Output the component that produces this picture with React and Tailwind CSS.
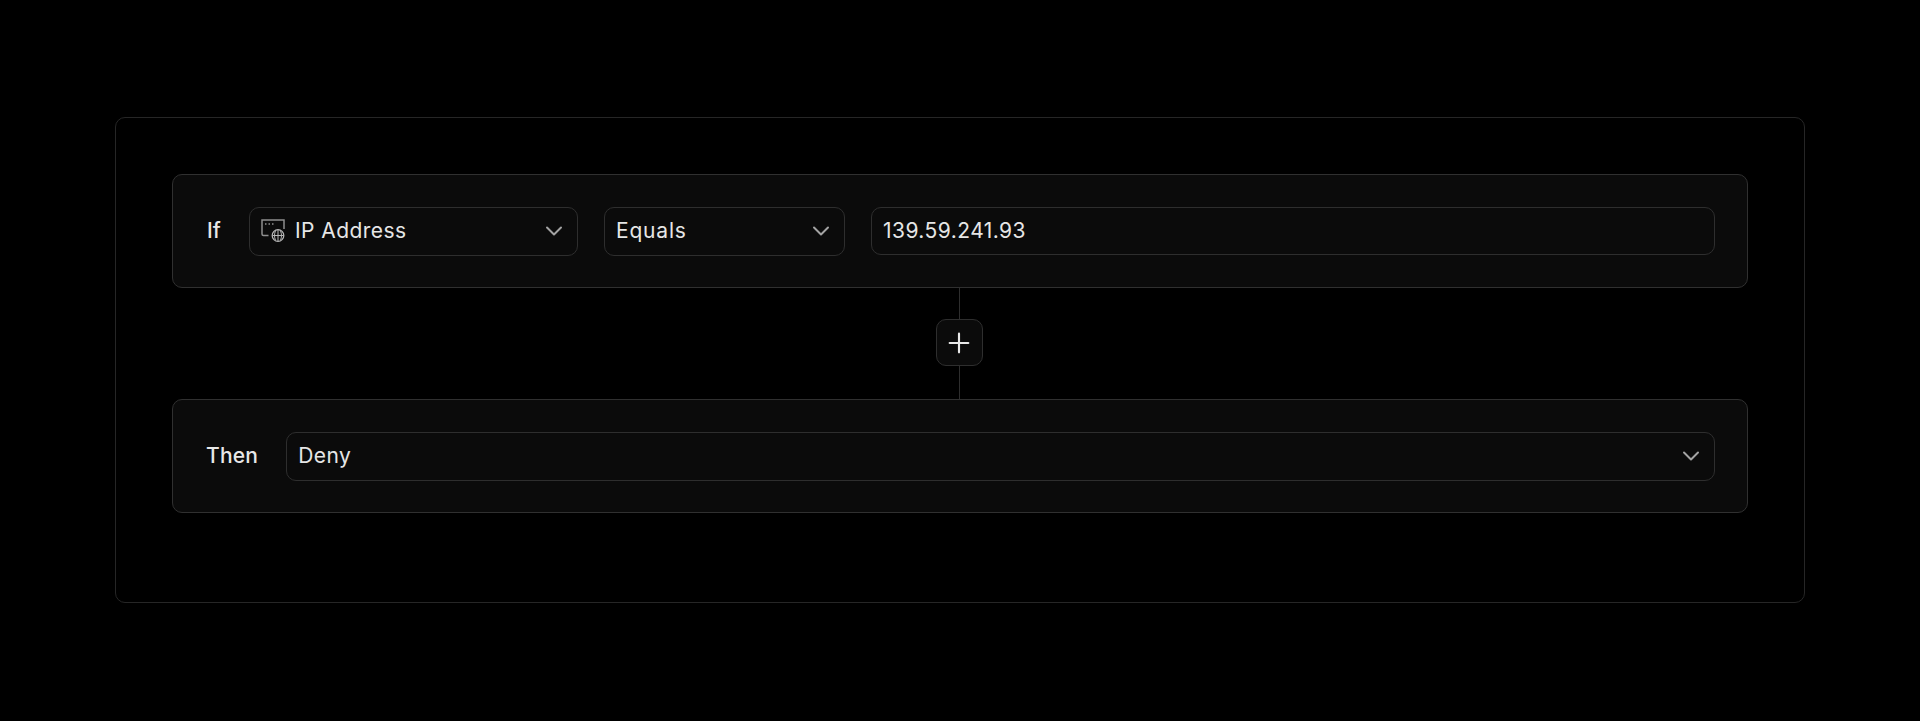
import { ChevronDown, Plus } from "lucide-react";

const font = { fontFamily: "Inter, sans-serif" };

function IpIcon() {
  return (
    <svg width="24" height="24" viewBox="0 0 24 24" fill="none" className="shrink-0">
      <path d="M7.5 16.5H2.5C1.4 16.5 1 16 1 15V1H23V10" stroke="#8f8f8f" strokeWidth="1.5" />
      <path d="M4 5H5.5M7.5 5H9M11 5H12.5" stroke="#8f8f8f" strokeWidth="1.3" />
      <circle cx="17" cy="16.5" r="5.8" stroke="#b5b5b5" strokeWidth="1.3" />
      <path d="M11.5 16.5H22.5M17 11V22M14.4 12C13.2 15 13.2 18 14.4 21M19.6 12C20.8 15 20.8 18 19.6 21" stroke="#b5b5b5" strokeWidth="1" />
    </svg>
  );
}

function Select({ className, icon, label, tracking = "tracking-[0.45px]" }) {
  return (
    <div className={`h-[49px] flex items-center justify-between pl-[11px] pr-[9px] rounded-[10px] border border-[#2e2e2e] ${className}`}>
      <div className="flex items-center gap-[10px]">
        {icon}
        <span className={`text-[21px] text-[#e6e6e6] ${tracking}`}>{label}</span>
      </div>
      <ChevronDown size={28} strokeWidth={1.7} className="text-[#a3a3a3]" />
    </div>
  );
}

export default function App() {
  return (
    <div className="min-h-[721px] bg-black pt-[117px] px-[115px]" style={font}>
      <div className="h-[486px] rounded-[10px] border border-[#262626] pt-[56px] px-[56px]">
        <div className="h-[114px] flex items-center gap-[28px] pl-[34px] pr-[32px] rounded-[10px] border border-[#303030] bg-[#0b0b0b]">
          <span className="text-[21px] font-medium text-[#e8e8e8] w-[14px]">If</span>
          <Select className="w-[329px]" label="IP Address" icon={<IpIcon />} />
          <Select className="w-[241px] -ml-[2px]" label="Equals" tracking="tracking-[0.8px]" />
          <div className="flex-1 h-[48px] flex items-center px-[11px] rounded-[10px] border border-[#2e2e2e] -ml-[2px]">
            <span className="text-[21px] text-[#e6e6e6] tracking-[0.45px]">139.59.241.93</span>
          </div>
        </div>
        <div className="h-[111px] pr-[2px] flex flex-col items-center">
          <div className="h-[31px] w-px bg-[#2e2e2e]" />
          <button className="w-[47px] h-[47px] flex items-center justify-center rounded-[10px] border border-[#2e2e2e] bg-[#0b0b0b] text-[#e8e8e8]">
            <Plus size={32} strokeWidth={1.6} />
          </button>
          <div className="flex-1 w-px bg-[#2e2e2e]" />
        </div>
        <div className="h-[114px] flex items-center gap-[28px] pl-[33px] pr-[32px] rounded-[10px] border border-[#303030] bg-[#0b0b0b]">
          <span className="text-[21px] font-medium text-[#e8e8e8] tracking-[0.2px]">Then</span>
          <Select className="flex-1" label="Deny" />
        </div>
      </div>
    </div>
  );
}
